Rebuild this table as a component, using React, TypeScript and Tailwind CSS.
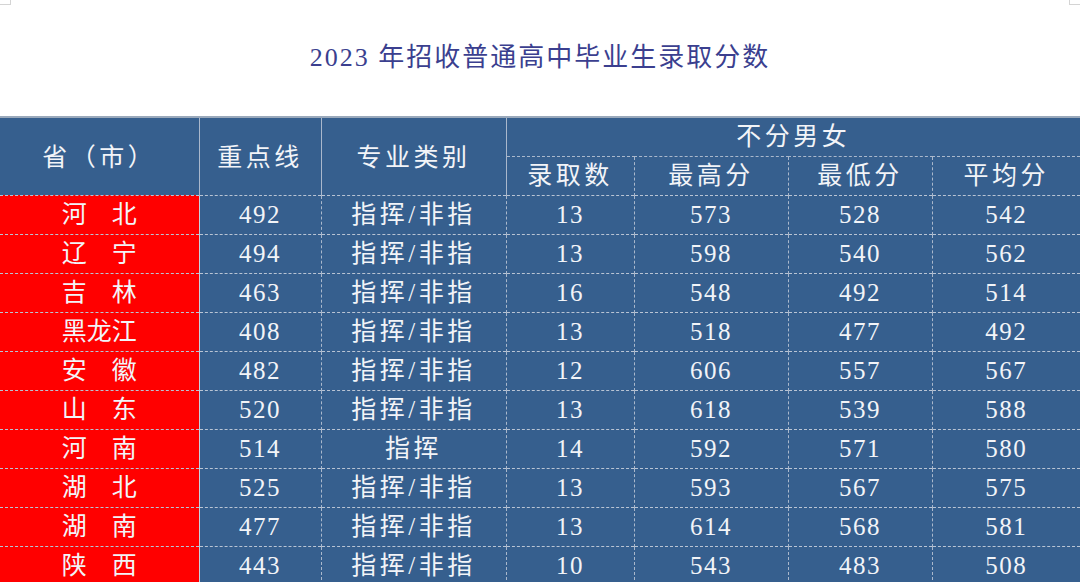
import React from "react";

const rows = [
  ["河　北", "492", "指挥/非指", "13", "573", "528", "542"],
  ["辽　宁", "494", "指挥/非指", "13", "598", "540", "562"],
  ["吉　林", "463", "指挥/非指", "16", "548", "492", "514"],
  ["黑龙江", "408", "指挥/非指", "13", "518", "477", "492"],
  ["安　徽", "482", "指挥/非指", "12", "606", "557", "567"],
  ["山　东", "520", "指挥/非指", "13", "618", "539", "588"],
  ["河　南", "514", "指挥", "14", "592", "571", "580"],
  ["湖　北", "525", "指挥/非指", "13", "593", "567", "575"],
  ["湖　南", "477", "指挥/非指", "13", "614", "568", "581"],
  ["陕　西", "443", "指挥/非指", "10", "543", "483", "508"],
];

const font = {
  fontFamily: '"Liberation Serif", "Noto Sans CJK SC", serif',
};

export default function App() {
  return (
    <div className="relative w-[1080px] h-[582px] overflow-hidden bg-white" style={font}>
      <div className="absolute left-0 top-0 w-[11px] h-[5px] border-r border-b border-[#d4d4d4]" />
      <div className="absolute right-0 top-0 w-[11px] h-[5px] border-l border-b border-[#d4d4d4]" />

      <h1 className="h-[116px] flex items-center justify-center pb-[2px] text-[26px] tracking-[2px] text-[#3b3f8f] font-normal">
        2023 年招收普通高中毕业生录取分数
      </h1>

      <table className="w-[1080px] table-fixed border-collapse text-[#f2f4f8] text-[25px] tracking-[3.5px]">
        <colgroup>
          <col className="w-[199px]" />
          <col className="w-[122px]" />
          <col className="w-[185px]" />
          <col className="w-[128px]" />
          <col className="w-[154px]" />
          <col className="w-[144px]" />
          <col className="w-[148px]" />
        </colgroup>
        <thead className="bg-[#365f8e]">
          <tr className="h-[39px] border-t-2 border-[#9aa9bb]">
            <th rowSpan={2} className="font-normal border-r border-[#aab8cc] pt-[2px]">省（市）</th>
            <th rowSpan={2} className="font-normal border-r border-[#aab8cc] pt-[2px]">重点线</th>
            <th rowSpan={2} className="font-normal border-r border-[#aab8cc] pt-[2px]">专业类别</th>
            <th colSpan={4} className="font-normal border-b border-dashed border-[#aab8cc]">不分男女</th>
          </tr>
          <tr className="h-[39px]">
            <th className="font-normal border-r border-dashed border-[#aab8cc]">录取数</th>
            <th className="font-normal border-r border-dashed border-[#aab8cc]">最高分</th>
            <th className="font-normal border-r border-dashed border-[#aab8cc]">最低分</th>
            <th className="font-normal">平均分</th>
          </tr>
        </thead>
        <tbody>
          {rows.map((r) => (
            <tr key={r[0]} className="h-[39px] border-t border-dashed border-[#b9c4d4]">
              <td className="bg-[#ff0000] text-center border-r border-[#c8d0dc] tracking-normal">{r[0]}</td>
              <td className="bg-[#365f8e] text-center border-r border-dashed border-[#aab8cc] tracking-[1.5px]">{r[1]}</td>
              <td className="bg-[#365f8e] text-center border-r border-dashed border-[#aab8cc] tracking-[3.5px]">{r[2]}</td>
              {r.slice(3).map((v, i) => (
                <td
                  key={i}
                  className={
                    "bg-[#365f8e] text-center tracking-[1.5px] " +
                    (i < 3 ? "border-r border-dashed border-[#aab8cc]" : "")
                  }
                >
                  {v}
                </td>
              ))}
            </tr>
          ))}
        </tbody>
      </table>
    </div>
  );
}
